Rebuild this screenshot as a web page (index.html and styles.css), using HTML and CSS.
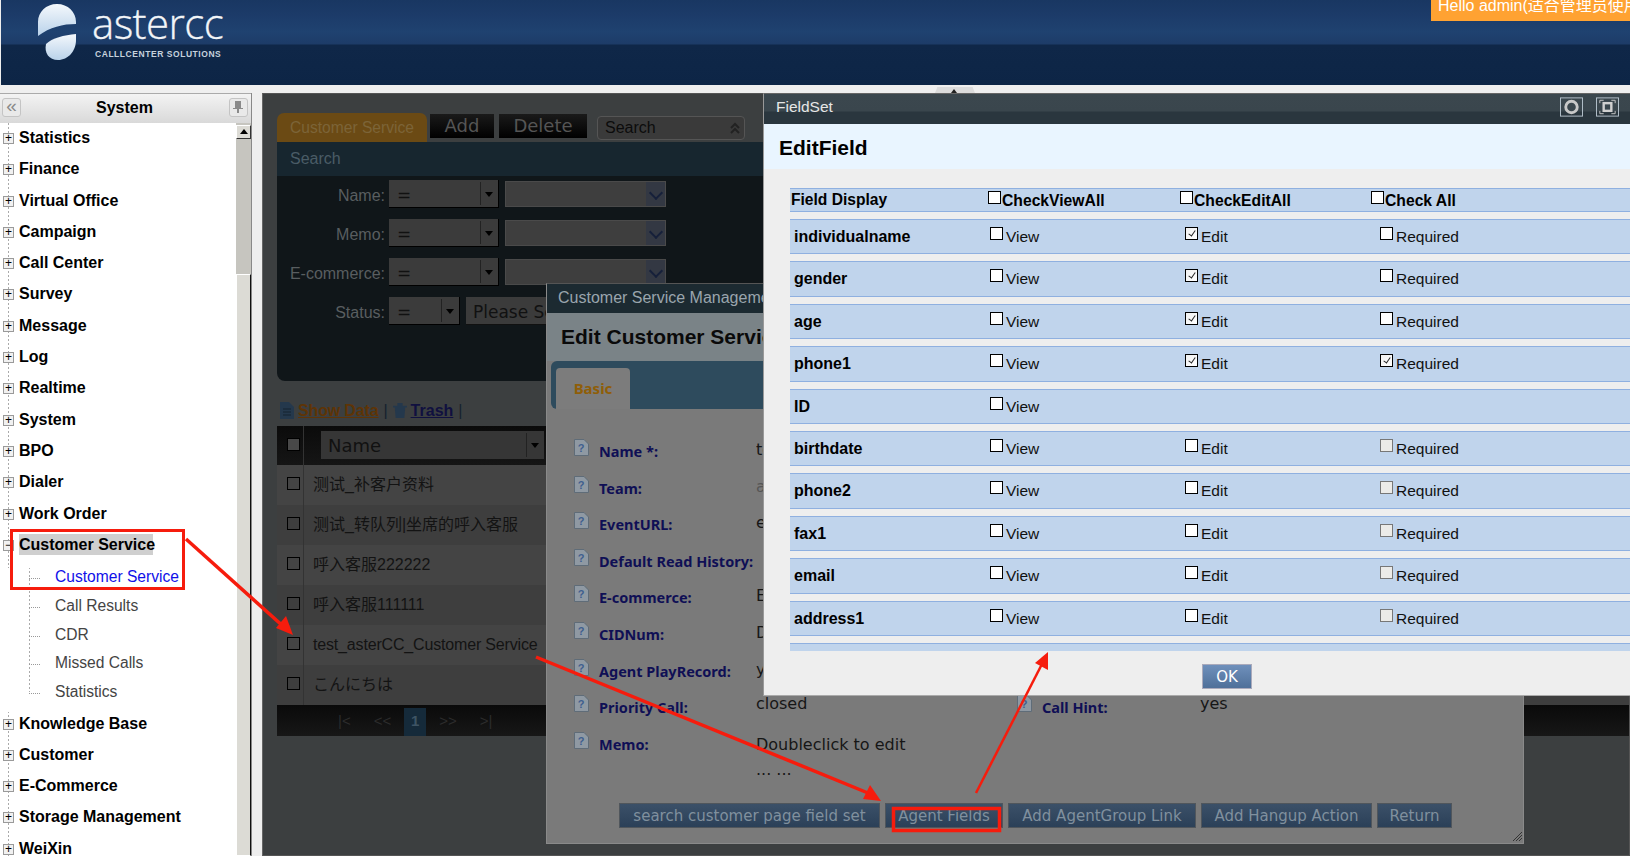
FILE: index.html
```html
<!DOCTYPE html>
<html lang="en">
<head>
<meta charset="utf-8">
<title>astercc</title>
<link rel="stylesheet" href="styles.css">
</head>
<body>
<div class="page">
  <header class="top">
    <div class="logo">
      <svg class="logo-mark" viewBox="0 0 40 58" aria-hidden="true">
        <defs><linearGradient id="lg" x1="0" y1="0" x2="0" y2="1"><stop offset="0" stop-color="#f4f8fc"/><stop offset="1" stop-color="#b9d2ea"/></linearGradient></defs>
        <path fill="url(#lg)" d="M1 33V19C1 9 9 1 20 1C31 1 39 9 39 19V21C26 21 13 24 1 33Z"/>
        <path fill="url(#lg)" d="M9 41C15 35 27 32 39 31V37C39 48 31 57 21 57C12 57 7 50 9 41Z"/>
      </svg>
      <div class="logo-text">
        <div class="logo-name">astercc</div>
        <div class="logo-sub">CALLLCENTER SOLUTIONS</div>
      </div>
    </div>
    <div class="hello">Hello admin(适合管理员使用)</div>
  </header>
  <div class="split"><span class="handle"></span></div>
  <div class="work">
    <aside class="side">
      <div class="side-head">
        <span class="side-btn">«</span>
        <span class="side-title">System</span>
        <span class="side-btn pin"><svg viewBox="0 0 10 12"><path fill="#8a8a8a" d="M2 0H8V7H10V8H6V12H4V8H0V7H2Z"/></svg></span>
      </div>
      <div class="side-body">
        <ul class="tree">
          <li class="node"><span class="exp">+</span><span>Statistics</span></li>
          <li class="node"><span class="exp">+</span><span>Finance</span></li>
          <li class="node"><span class="exp">+</span><span>Virtual Office</span></li>
          <li class="node"><span class="exp">+</span><span>Campaign</span></li>
          <li class="node"><span class="exp">+</span><span>Call Center</span></li>
          <li class="node"><span class="exp">+</span><span>Survey</span></li>
          <li class="node"><span class="exp">+</span><span>Message</span></li>
          <li class="node"><span class="exp">+</span><span>Log</span></li>
          <li class="node"><span class="exp">+</span><span>Realtime</span></li>
          <li class="node"><span class="exp">+</span><span>System</span></li>
          <li class="node"><span class="exp">+</span><span>BPO</span></li>
          <li class="node"><span class="exp">+</span><span>Dialer</span></li>
          <li class="node"><span class="exp">+</span><span>Work Order</span></li>
          <li class="node"><span class="exp">−</span><span class="sel">Customer Service</span></li>
          <li class="kids">
            <div class="kid active">Customer Service</div>
            <div class="kid">Call Results</div>
            <div class="kid">CDR</div>
            <div class="kid">Missed Calls</div>
            <div class="kid">Statistics</div>
          </li>
          <li class="node"><span class="exp">+</span><span>Knowledge Base</span></li>
          <li class="node"><span class="exp">+</span><span>Customer</span></li>
          <li class="node"><span class="exp">+</span><span>E-Commerce</span></li>
          <li class="node"><span class="exp">+</span><span>Storage Management</span></li>
          <li class="node"><span class="exp">+</span><span>WeiXin</span></li>
        </ul>
        <div class="sbar">
          <span class="sbar-up"></span>
          <span class="sbar-thumb"></span>
        </div>
      </div>
    </aside>
    <main class="main">
      <div class="tabs">
        <span class="tab-on">Customer Service</span>
        <span class="tab-btn add">Add</span>
        <span class="tab-btn del">Delete</span>
        <span class="tab-search">Search<svg class="dbl" viewBox="0 0 10 12"><path fill="none" stroke="#222" stroke-width="2" d="M1 6L5 2L9 6M1 11L5 7L9 11"/></svg></span>
      </div>
      <section class="panel">
        <div class="panel-bar">Search</div>
        <div class="panel-body">
          <div class="q"><label>Name:</label><span class="sel-op">=<i></i></span><span class="sel-val"><b></b></span><label class="q2">CIDNum:</label></div>
          <div class="q"><label>Memo:</label><span class="sel-op">=<i></i></span><span class="sel-val"><b></b></span><label class="q2">Team:</label></div>
          <div class="q"><label>E-commerce:</label><span class="sel-op">=<i></i></span><span class="sel-val"><b></b></span><label class="q2">Call:</label></div>
          <div class="q"><label>Status:</label><span class="sel-op short">=<i></i></span><span class="sel-please">Please Select</span></div>
        </div>
      </section>
      <div class="links">
        <svg class="ico" viewBox="0 0 14 17"><path fill="#24384c" d="M0 0H9L14 5V17H0Z"/><path stroke="#15222e" d="M3 7H11M3 10H11M3 13H11"/></svg>
        <a class="lnk-a">Show Data</a><span class="bar">|</span>
        <svg class="ico" viewBox="0 0 16 17"><path fill="#24384c" d="M2 5H14L13 17H3ZM0 3H16V5H0ZM5 0H11V3H5Z"/></svg>
        <a class="lnk-b">Trash</a><span class="bar">|</span>
      </div>
      <div class="grid">
        <div class="ghead"><span class="gc"><span class="cb dark"></span></span><span class="gn"><span class="name-sel">Name<i></i></span></span></div>
        <div class="grow"><span class="gc"><span class="cb dark"></span></span><span class="gt">测试_补客户资料</span></div>
        <div class="grow alt"><span class="gc"><span class="cb dark"></span></span><span class="gt">测试_转队列|坐席的呼入客服</span></div>
        <div class="grow"><span class="gc"><span class="cb dark"></span></span><span class="gt">呼入客服222222</span></div>
        <div class="grow alt"><span class="gc"><span class="cb dark"></span></span><span class="gt">呼入客服111111</span></div>
        <div class="grow"><span class="gc"><span class="cb dark"></span></span><span class="gt lat">test_asterCC_Customer Service</span></div>
        <div class="grow alt"><span class="gc"><span class="cb dark"></span></span><span class="gt">こんにちは</span></div>
        <div class="pager"><span>|&lt;</span><span>&lt;&lt;</span><span class="cur">1</span><span>&gt;&gt;</span><span>&gt;|</span><span class="pl">L</span></div>
      </div>
    </main>
  </div>

  <section class="win win-edit">
    <div class="win-title">Customer Service Management</div>
    <div class="win-head">Edit Customer Service</div>
    <div class="tabstrip"><span class="tab-basic">Basic</span></div>
    <div class="form">
      <div class="flab"><svg class="help"><use href="#q"/></svg>Name *:</div><div class="fval">test_asterCC_Customer Service</div><div></div><div></div>
      <div class="flab"><svg class="help"><use href="#q"/></svg>Team:</div><div class="fval light">admin</div><div></div><div></div>
      <div class="flab"><svg class="help"><use href="#q"/></svg>EventURL:</div><div class="fval">event</div><div></div><div></div>
      <div class="flab"><svg class="help"><use href="#q"/></svg>Default Read History:</div><div class="fval"></div><div></div><div></div>
      <div class="flab"><svg class="help"><use href="#q"/></svg>E-commerce:</div><div class="fval">E-commerce</div><div></div><div></div>
      <div class="flab"><svg class="help"><use href="#q"/></svg>CIDNum:</div><div class="fval">Default</div><div></div><div></div>
      <div class="flab"><svg class="help"><use href="#q"/></svg>Agent PlayRecord:</div><div class="fval">yes</div><div></div><div></div>
      <div class="flab"><svg class="help"><use href="#q"/></svg>Priority Call:</div><div class="fval up">closed</div><div class="flab"><svg class="help"><use href="#q"/></svg>Call Hint:</div><div class="fval up">yes</div>
      <div class="flab"><svg class="help"><use href="#q"/></svg>Memo:</div><div class="fval up memo">Doubleclick to edit<br>... ...</div><div></div><div></div>
    </div>
    <div class="actions">
      <span class="act a1">search customer page field set</span>
      <span class="act a2">Agent Fields</span>
      <span class="act a3">Add AgentGroup Link</span>
      <span class="act a4">Add Hangup Action</span>
      <span class="act a5">Return</span>
    </div>
    <svg class="grip" viewBox="0 0 10 10"><path stroke="#333" d="M1 10L10 1M4 10L10 4M7 10L10 7"/></svg>
  </section>

  <section class="win win-field">
    <div class="fw-title">FieldSet
      <span class="fw-btns">
        <svg class="wbtn" viewBox="0 0 24 20"><rect x=".5" y=".5" width="23" height="19" fill="none" stroke="#b6c2cc"/><circle cx="12" cy="10" r="6" fill="none" stroke="#c8c8c8" stroke-width="3"/></svg>
        <svg class="wbtn" viewBox="0 0 24 20"><rect x=".5" y=".5" width="23" height="19" fill="none" stroke="#b6c2cc"/><rect x="8" y="6" width="8" height="8" fill="none" stroke="#d0d0d0" stroke-width="2.5"/><path fill="none" stroke="#c8c8c8" d="M4 6V3H8M16 3H20V6M20 14V17H16M8 17H4V14"/></svg>
      </span>
    </div>
    <div class="fw-head">EditField</div>
    <div class="fw-body">
      <div class="rows">
        <div class="row hd"><span class="n">Field Display</span><span class="c"><span class="cb"></span>CheckViewAll</span><span class="c"><span class="cb"></span>CheckEditAll</span><span class="c"><span class="cb"></span>Check All</span></div>
        <div class="row"><span class="n">individualname</span><span class="c"><span class="cb"></span>View</span><span class="c"><span class="cb on"></span>Edit</span><span class="c"><span class="cb"></span>Required</span></div>
        <div class="row"><span class="n">gender</span><span class="c"><span class="cb"></span>View</span><span class="c"><span class="cb on"></span>Edit</span><span class="c"><span class="cb"></span>Required</span></div>
        <div class="row"><span class="n">age</span><span class="c"><span class="cb"></span>View</span><span class="c"><span class="cb on"></span>Edit</span><span class="c"><span class="cb"></span>Required</span></div>
        <div class="row"><span class="n">phone1</span><span class="c"><span class="cb"></span>View</span><span class="c"><span class="cb on"></span>Edit</span><span class="c"><span class="cb on"></span>Required</span></div>
        <div class="row"><span class="n">ID</span><span class="c"><span class="cb"></span>View</span></div>
        <div class="row"><span class="n">birthdate</span><span class="c"><span class="cb"></span>View</span><span class="c"><span class="cb"></span>Edit</span><span class="c"><span class="cb off"></span>Required</span></div>
        <div class="row"><span class="n">phone2</span><span class="c"><span class="cb"></span>View</span><span class="c"><span class="cb"></span>Edit</span><span class="c"><span class="cb off"></span>Required</span></div>
        <div class="row"><span class="n">fax1</span><span class="c"><span class="cb"></span>View</span><span class="c"><span class="cb"></span>Edit</span><span class="c"><span class="cb off"></span>Required</span></div>
        <div class="row"><span class="n">email</span><span class="c"><span class="cb"></span>View</span><span class="c"><span class="cb"></span>Edit</span><span class="c"><span class="cb off"></span>Required</span></div>
        <div class="row"><span class="n">address1</span><span class="c"><span class="cb"></span>View</span><span class="c"><span class="cb"></span>Edit</span><span class="c"><span class="cb off"></span>Required</span></div>
        <div class="row"></div>
      </div>
      <div class="okbar"><span class="ok">OK</span></div>
    </div>
  </section>

  <svg class="marks" viewBox="0 0 1630 856" aria-hidden="true">
    <defs>
      <symbol id="q" viewBox="0 0 15 17"><path fill="#8f99a3" stroke="#5f6c78" d="M.5 .5H10L14.5 5V16.5H.5Z"/><text x="7" y="13" font-family="Liberation Sans" font-size="11" font-weight="700" fill="#3f5f8f" text-anchor="middle">?</text></symbol>
    </defs>
    <rect x="11.5" y="530.5" width="172" height="58" fill="none" stroke="#f61c0d" stroke-width="3"/>
    <rect x="893.500" y="808.500" width="106" height="22" fill="none" stroke="#f61c0d" stroke-width="3.500"/>
    <path d="M186 539L284 627" stroke="#f61c0d" stroke-width="3.500" fill="none"/>
    <path d="M293 635L276 628L286 616Z" fill="#f61c0d"/>
    <path d="M536 657L868 793" stroke="#f61c0d" stroke-width="3.500" fill="none"/>
    <path d="M881 801L863 799L870 785Z" fill="#f61c0d"/>
    <path d="M976 793L1042 664" stroke="#f61c0d" stroke-width="2.500" fill="none"/>
    <path d="M1048 652L1048 670L1035 663Z" fill="#f61c0d"/>
  </svg>
</div>
</body>
</html>
```
FILE: styles.css
```css
* { box-sizing: border-box; }
html, body { margin: 0; padding: 0; height: 100%; overflow: hidden; }
body { background: #eeeeee; font-family: "Liberation Sans", "Noto Sans CJK SC", sans-serif; }
.page { position: relative; width: 1630px; height: 856px; overflow: hidden; }

/* header */
.top { height: 85px; margin-left: 1px; display: flex; justify-content: space-between; align-items: flex-start;
  background: linear-gradient(180deg, #193762 0, #1c3b69 15px, #1f4270 32px, #1d3c68 44px, #0f2748 45px, #0d2546 85px); }
.logo { display: flex; margin-left: 36px; padding-top: 3px; }
.logo-mark { width: 40px; height: 58px; }
.logo-text { margin-left: 15px; color: #f2f5f8; }
.logo-name { font-family: "Open Sans", sans-serif; font-weight: 300; font-size: 42px; line-height: 40px; letter-spacing: -.6px; -webkit-text-stroke: .3px #f2f5f8; }
.logo-sub { font-family: "Liberation Sans", sans-serif; font-weight: 700; font-size: 8.5px; line-height: 10px; margin: 6px 0 0 3px; color: #c6d2dd; letter-spacing: .55px; white-space: nowrap; }
.hello { width: 199px; height: 21px; background: #ffa232; color: #fff; font-size: 16px; line-height: 11px; padding-left: 7px; white-space: nowrap; overflow: hidden; }

.split { height: 8px; position: relative; background: #efefef; }
.handle { position: absolute; left: 935px; top: 2px; width: 40px; height: 6px; background: #dcdcdc;
  clip-path: polygon(6% 0, 94% 0, 100% 100%, 0 100%); }
.handle::after { content: ""; position: absolute; left: 16px; top: 2px; border: 3px solid transparent; border-top: 0; border-bottom: 4px solid #222; }

.work { display: flex; height: 763px; }

/* sidebar */
.side { width: 252px; border-right: 1px solid #888; flex: none; background: #fff; }
.side-head { height: 30px; display: flex; align-items: center; justify-content: space-between; padding: 0 3px 2px 2px;
  border-top: 1px solid #aaa; background: linear-gradient(180deg, #f3f3f3, #d9d9d9); }
.side-title { font-weight: 700; font-size: 16px; color: #000; margin-left: -1px; }
.side-btn { width: 19px; height: 19px; border: 1px solid #c4c4c4; border-radius: 3px; background: #e9e9e9; color: #8a8a8a; font-size: 19px; line-height: 13px; text-align: center; }
.side-btn svg { width: 10px; height: 12px; display: block; margin: 2px auto 0; }
.side-body { display: flex; height: 733px; }
.tree { list-style: none; margin: 0; padding: 6px 0 0; flex: 1; overflow: hidden; font-size: 16px; font-weight: 700; color: #000;
  background: repeating-linear-gradient(#aaa 0 2px, transparent 2px 4px) 8px 0 / 1px 100% no-repeat; }
.node { height: 31.3px; display: flex; align-items: flex-start; padding-left: 3px; line-height: 18px; white-space: nowrap; }
.exp { width: 11px; height: 11px; margin: 4px 5px 0 0; flex: none; border: 1px solid #9a9a9a; background: #f1f1f1; color: #000; font-size: 12px; line-height: 9px; text-align: center; font-weight: 400; }
.sel { background: #cfcfcf; padding: 2px 0; height: 21px; margin-top: -2px; width: 134px; line-height: 18px; }
.kids { margin: 1px 0 3px; padding-left: 29px; font-size: 15.6px; font-weight: 400; color: #444; position: relative; background: repeating-linear-gradient(#aaa 0 2px, transparent 2px 4px) 29px -1px / 1px 125px no-repeat, #fff; }
.kid { height: 28.7px; line-height: 18px; padding-left: 26px; position: relative; }
.kid::before { content: ""; position: absolute; left: 0; top: 10px; width: 11px; border-top: 1px dotted #999; }
.kid.active { color: #1010e8; }
.sbar { width: 15px; flex: none; background: #c6c5bf; position: relative; }
.sbar-up { display: block; height: 14px; margin-top: 2px; background: #dcdbd5; border: 1px solid #fff; border-right-color: #333; border-bottom-color: #333; position: relative; }
.sbar-up::after { content: ""; position: absolute; left: 3px; top: 3px; border: 4px solid transparent; border-top: 0; border-bottom: 5px solid #000; }
.sbar-thumb { position: absolute; left: 0; top: 151px; width: 15px; height: 582px; background: #dcdbd5; border: 1px solid #fff; border-right-color: #111; }

/* main */
.main { flex: 1; margin-left: 10px; background: #3c3f40; border: 1px solid #555; border-left-color: #666; padding: 19px 0 0 14px; overflow: hidden; font-size: 16px; min-width: 0; }
.tabs { display: flex; height: 29px; align-items: flex-start; width: 1400px; }
.tab-on { width: 150px; height: 29px; background: #6b4a14; border-radius: 7px 7px 0 0; color: #7c6438; font-size: 15.6px; line-height: 29px; padding-left: 13px; }
.tab-btn { height: 24px; margin: 1px 0 0 3px; background: linear-gradient(#1a1a1a, #000); color: #555; font-family: "DejaVu Sans", sans-serif; font-size: 18px; line-height: 24px; text-align: center; }
.add { width: 64px; }
.del { width: 88px; margin-left: 5px; }
.tab-search { width: 148px; height: 24px; margin: 3px 0 0 10px; border: 1px solid #555; border-radius: 4px; background: #3a3a3a; color: #0c0c0c; line-height: 22px; padding-left: 7px; position: relative; }
.dbl { position: absolute; right: 4px; top: 5px; width: 10px; height: 12px; }
.panel { width: 1400px; border-radius: 0 0 8px 8px; overflow: hidden; background: #101619; }
.panel-bar { height: 34px; background: #17262f; color: #4a5c66; line-height: 34px; padding-left: 13px; }
.panel-body { height: 205px; padding-top: 4px; display: flex; flex-direction: column; gap: 11px; }
.q { display: flex; height: 28px; align-items: center; color: #595e60; }
.q label { width: 108px; text-align: right; margin-right: 4px; padding-top: 3px; }
.q .q2 { width: 172px; margin: 0; }
.sel-op { width: 110px; height: 28px; background: #3b3b3b; border-bottom: 1px solid #000; border-right: 1px solid #000; color: #111; font-size: 17px; line-height: 30px; padding-left: 8px; position: relative; font-family: "DejaVu Sans", sans-serif; }
.sel-op.short { width: 71px; }
.sel-op i, .name-sel i { position: absolute; right: 0; top: 2px; bottom: 2px; width: 18px; border-left: 1px solid #222; }
.sel-op i::after, .name-sel i::after { content: ""; position: absolute; left: 4px; top: 10px; border: 4px solid transparent; border-bottom: 0; border-top: 5px solid #000; }
.sel-val { width: 161px; height: 26px; margin-left: 6px; background: #3e3e3e; border: 1px solid #4a4a4a; position: relative; }
.sel-val b { position: absolute; right: 0; top: 0; bottom: 0; width: 19px; background: #333843; }
.sel-val b::after { content: ""; position: absolute; left: 5px; top: 6px; width: 8px; height: 8px; border-right: 2px solid #16203a; border-bottom: 2px solid #16203a; transform: rotate(45deg); }
.sel-please { width: 200px; height: 28px; margin-left: 6px; background: #3b3b3b; border-bottom: 1px solid #111; color: #111; font-family: "DejaVu Sans", sans-serif; font-size: 17px; line-height: 30px; padding-left: 7px; white-space: nowrap; overflow: hidden; }
.links { height: 45px; display: flex; align-items: flex-start; padding: 21px 0 0 3px; font-weight: 700; font-size: 16px; line-height: 18px; }
.ico { width: 14px; height: 17px; margin-right: 4px; }
.lnk-a { color: #5e3406; text-decoration: underline; letter-spacing: -.15px; }
.lnk-b { color: #10103f; text-decoration: underline; }
.bar { color: #14222e; margin: 0 5px; font-weight: 400; }
.grid { width: 1400px; }
.ghead { height: 39px; background: linear-gradient(#0b0b0b, #151515); display: flex; }
.gc { width: 27px; flex: none; border-right: 1px solid #333; padding: 11px 0 0 10px; }
.grow .gc { padding-top: 11px; }
.gn { padding: 5px 0 0 17px; }
.name-sel { display: block; width: 223px; height: 28px; background: #363636; color: #111; font-family: "DejaVu Sans", sans-serif; font-size: 18px; line-height: 29px; padding-left: 7px; position: relative; }
.grow { height: 40px; background: #444444; display: flex; }
.grow.alt { background: #3e3e3e; }
.gt { padding-left: 9px; line-height: 40px; color: #131313; white-space: nowrap; }
.gt.lat { letter-spacing: -.17px; line-height: 39px; }
.pager { height: 31px; background: linear-gradient(#0a0a0a, #171717); display: flex; color: #2c2c2c; padding-left: 61px; font-size: 15px; line-height: 32px; gap: 23px; }
.pager .cur { width: 22px; margin: 3px -10px 0; height: 28px; background: #152a3a; color: #3e5464; text-align: center; font-weight: 700; line-height: 26px; }
.pager .pl { margin-left: 36px; color: #444; }

.cb { display: inline-block; width: 13px; height: 13px; background: #fff; border: 1px solid #000; flex: none; }
.cb.dark { background: transparent; border-color: #000; }
.ghead .cb.dark { background: #484848; }
.cb.off { background: #ecebe8; border-color: #777; }
.cb.on { background: linear-gradient(135deg, #f0f0f0, #fff); position: relative; }
.cb.on::after { content: ""; position: absolute; left: 4px; top: 1px; width: 3px; height: 6px; border-right: 1px solid #222; border-bottom: 1px solid #222; transform: rotate(35deg); }

/* floating windows */
.win { position: absolute; }
.win-edit { left: 546px; top: 283px; width: 978px; height: 561px; background: #7a7a7a; border: 1px solid #8a8a8a; border-top-color: #555; }
.win-title { height: 29px; background: #1c2a31; color: #9aa5ad; font-size: 16px; line-height: 27px; padding-left: 11px; white-space: nowrap; }
.win-head { height: 48px; background: #7a8387; color: #0a0a0a; font-weight: 700; font-size: 21px; line-height: 47px; padding-left: 14px; white-space: nowrap; }
.tabstrip { height: 48px; margin-left: 4px; background: #2e4b5d; border-radius: 6px 0 0 6px; padding: 7px 0 0 5px; }
.tab-basic { display: block; width: 74px; height: 41px; background: #7c7c7c; border-radius: 4px 4px 0 0; color: #8f5e08; font-family: "Noto Sans", sans-serif; font-weight: 700; font-size: 15px; line-height: 40px; text-align: center; }
.form { display: grid; grid-template-columns: 182px 261px 183px 1fr; grid-auto-rows: 36.6px; padding: 32px 0 0 27px; font-family: "DejaVu Sans", sans-serif; font-size: 16px; color: #161616; }
.flab { display: flex; align-items: flex-start; color: #0f0f55; font-family: "Noto Sans", sans-serif; font-weight: 700; font-size: 14.500px; line-height: 20px; white-space: nowrap; }
.help { width: 15px; height: 17px; margin: -2px 10px 0 0; flex: none; }
.fval { line-height: 18px; white-space: nowrap; overflow: hidden; }
.fval.up { margin-top: -2px; overflow: visible; }
.fval.light { color: #555; }
.memo { line-height: 25px; }
.actions { position: absolute; left: 72px; top: 519px; display: flex; gap: 5px; font-family: "DejaVu Sans", sans-serif; font-size: 15px; }
.act { height: 25px; background: linear-gradient(#3b5068, #2b4058); border: 1px solid #50565c; color: #80909e; line-height: 24px; text-align: center; white-space: nowrap; overflow: hidden; }
.a1 { width: 261px; }
.a2 { width: 118px; }
.a3 { width: 188px; }
.a4 { width: 171px; }
.a5 { width: 75px; }
.grip { position: absolute; right: 1px; bottom: 2px; width: 10px; height: 10px; }

.win-field { left: 763px; top: 93px; width: 880px; height: 603px; background: #eeeeee; border-left: 1px solid #999; border-bottom: 1px solid #aaa; border-top: 1px solid #666; }
.fw-title { height: 30px; background: linear-gradient(#3b474e 0, #3a464d 17px, #2a363e 18px, #2a363e); color: #e6e6e6; font-size: 15.500px; line-height: 25px; padding-left: 12px; position: relative; white-space: nowrap; }
.fw-btns { position: absolute; left: 796px; top: 3px; display: flex; gap: 13px; }
.wbtn { width: 23px; height: 20px; }
.fw-head { height: 45px; background: #e9f5ff; color: #000; font-weight: 700; font-size: 21px; line-height: 48px; padding-left: 15px; }
.fw-body { padding: 19px 0 0 26px; }
.rows { height: 463px; overflow: hidden; display: flex; flex-direction: column; gap: 7px; }
.row { flex: none; height: 35.4px; background: #c0d4ec; border-top: 1px solid #8fb0e0; border-bottom: 1px solid #8fb0e0; display: grid; grid-template-columns: 200px 195px 195px 1fr; font-size: 15.500px; color: #111; }
.row .n { font-weight: 700; font-size: 16px; padding: 8px 0 0 4px; color: #000; }
.row .c { display: flex; align-items: flex-start; padding-top: 7px; line-height: 20px; }
.row .cb { margin: 0 3px 0 0; }
.row.hd { height: 24px; grid-template-columns: 198px 192px 191px 1fr; font-size: 15.700px; font-weight: 700; color: #000; }
.row.hd .n { padding: 2px 0 0 1px; font-size: 15.600px; }
.row.hd .c { padding-top: 2px; }
.row.hd .cb { margin: 0 1px 0 0; }
.okbar { padding-top: 13px; padding-left: 412px; }
.ok { display: block; width: 50px; height: 25px; background: linear-gradient(#6f90bc, #4f7099); border: 1px solid #aab; color: #fff; font-family: "DejaVu Sans", sans-serif; font-size: 15px; line-height: 24px; text-align: center; }

.marks { position: absolute; left: 0; top: 0; width: 1630px; height: 856px; pointer-events: none; }
```
